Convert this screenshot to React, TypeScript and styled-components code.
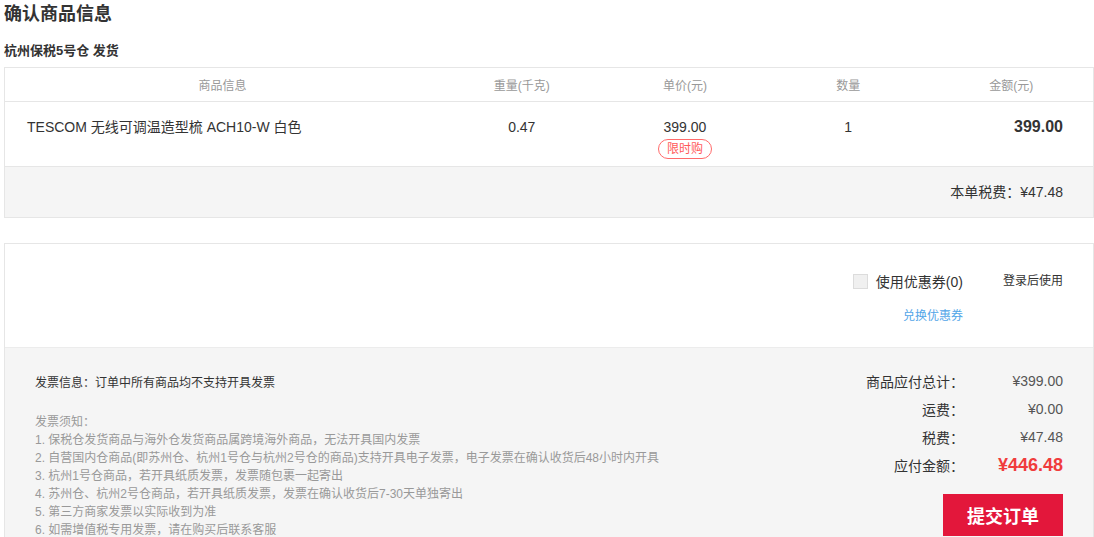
import React from "react";
import styled, { createGlobalStyle } from "styled-components";

const Global = createGlobalStyle`
  html, body { margin: 0; padding: 0; background: #fff; }
  body {
    font-family: "Liberation Sans", Arial, "Noto Sans CJK SC", sans-serif;
    color: #333;
  }
`;

const Page = styled.div`
  width: 1090px;
  padding-left: 4px;
`;

const Title = styled.h2`
  margin: 0;
  font-size: 18px;
  font-weight: bold;
  line-height: 28px;
  color: #333;
`;

const Warehouse = styled.div`
  margin-top: 13px;
  margin-bottom: 6px;
  font-size: 13px;
  font-weight: bold;
  line-height: 20px;
  color: #333;
`;

const Box = styled.div<{ $top?: number }>`
  border: 1px solid #e6e6e6;
  margin-top: ${(p) => p.$top ?? 0}px;
`;

const GridRow = styled.div`
  display: grid;
  grid-template-columns: 40% 15% 15% 15% 15%;
  border-bottom: 1px solid #e6e6e6;
`;

const HeadRow = styled(GridRow)`
  box-sizing: border-box;
  height: 34px;
  padding-bottom: 1px;
  align-items: center;
  font-size: 12px;
  color: #999;
  text-align: center;
`;

const ItemRow = styled(GridRow)`
  height: 49px;
  padding-top: 15px;
  font-size: 14px;
  line-height: 20px;
  color: #333;
`;

const Cell = styled.div<{ $align?: "left" | "center" | "right" }>`
  text-align: ${(p) => p.$align ?? "center"};
  padding: ${(p) => (p.$align === "left" ? "0 0 0 22px" : p.$align === "right" ? "0 30px 0 0" : "0")};
  display: flex;
  flex-direction: column;
  align-items: ${(p) => (p.$align === "left" ? "flex-start" : p.$align === "right" ? "flex-end" : "center")};
`;

const Amount = styled.span`
  font-size: 16px;
  font-weight: bold;
  color: #333;
`;

const Badge = styled.span`
  margin-top: 2px;
  display: inline-block;
  box-sizing: border-box;
  height: 20px;
  line-height: 18px;
  padding: 0 8px;
  border: 1px solid #ff6b6b;
  border-radius: 10px;
  font-size: 12px;
  color: #ff5a5a;
`;

const TaxRow = styled.div`
  height: 50px;
  line-height: 50px;
  background: #f5f5f5;
  text-align: right;
  padding-right: 30px;
  font-size: 14px;
  color: #333;
`;

const CouponSection = styled.div`
  height: 76px;
  padding: 27px 30px 0 0;
  display: flex;
  justify-content: flex-end;
  align-items: flex-start;
`;

const CouponCol = styled.div`
  display: flex;
  flex-direction: column;
  align-items: flex-end;
`;

const CheckLine = styled.label`
  display: flex;
  align-items: center;
  height: 20px;
  font-size: 14px;
  color: #333;
`;

const Check = styled.span`
  width: 13px;
  height: 13px;
  border: 1px solid #dcdcdc;
  background: #f0f0f0;
  margin-right: 8px;
`;

const Link = styled.a`
  margin-top: 15px;
  font-size: 12px;
  line-height: 20px;
  color: #52a6e8;
  text-decoration: none;
`;

const LoginHint = styled.div`
  margin-left: 40px;
  font-size: 12px;
  line-height: 20px;
  color: #333;
`;

const Footer = styled.div`
  background: #f5f5f5;
  border-top: 1px solid #ececec;
  padding: 19px 30px 0 30px;
  display: flex;
  justify-content: space-between;
  min-height: 200px;
`;

const Invoice = styled.div`
  font-size: 12px;
  line-height: 18px;
  padding-top: 7px;
`;

const InvoiceHead = styled.div`
  color: #333;
  margin-bottom: 21px;
`;

const Notes = styled.div`
  color: #999;
`;

const Summary = styled.div`
  display: flex;
  flex-direction: column;
  align-items: flex-end;
`;

const SumRow = styled.div`
  display: grid;
  grid-template-columns: 120px 99px;
  align-items: center;
  height: 28px;
  font-size: 14px;
`;

const SumLabel = styled.span`
  text-align: right;
  color: #333;
`;

const SumValue = styled.span<{ $total?: boolean }>`
  text-align: right;
  color: ${(p) => (p.$total ? "#f03c3c" : "#555")};
  font-size: ${(p) => (p.$total ? "18px" : "14px")};
  font-weight: ${(p) => (p.$total ? "bold" : "normal")};
`;

const Submit = styled.button`
  margin-top: 15px;
  width: 120px;
  height: 42px;
  border: none;
  background: #e3173b;
  color: #fff;
  font-family: "Noto Sans CJK SC", sans-serif;
  font-size: 18px;
  font-weight: bold;
  cursor: pointer;
`;

const notes = [
  "发票须知：",
  "1. 保税仓发货商品与海外仓发货商品属跨境海外商品，无法开具国内发票",
  "2. 自营国内仓商品(即苏州仓、杭州1号仓与杭州2号仓的商品)支持开具电子发票，电子发票在确认收货后48小时内开具",
  "3. 杭州1号仓商品，若开具纸质发票，发票随包裹一起寄出",
  "4. 苏州仓、杭州2号仓商品，若开具纸质发票，发票在确认收货后7-30天单独寄出",
  "5. 第三方商家发票以实际收到为准",
  "6. 如需增值税专用发票，请在购买后联系客服",
];

const sums: { label: string; value: string; total?: boolean }[] = [
  { label: "商品应付总计：", value: "¥399.00" },
  { label: "运费：", value: "¥0.00" },
  { label: "税费：", value: "¥47.48" },
  { label: "应付金额：", value: "¥446.48", total: true },
];

export default function App() {
  return (
    <Page>
      <Global />
      <Title>确认商品信息</Title>
      <Warehouse>杭州保税5号仓 发货</Warehouse>
      <Box>
        <HeadRow>
          <Cell>商品信息</Cell>
          <Cell>重量(千克)</Cell>
          <Cell>单价(元)</Cell>
          <Cell>数量</Cell>
          <Cell>金额(元)</Cell>
        </HeadRow>
        <ItemRow>
          <Cell $align="left">TESCOM 无线可调温造型梳 ACH10-W 白色</Cell>
          <Cell>0.47</Cell>
          <Cell>
            <span>399.00</span>
            <Badge>限时购</Badge>
          </Cell>
          <Cell>1</Cell>
          <Cell $align="right">
            <Amount>399.00</Amount>
          </Cell>
        </ItemRow>
        <TaxRow>本单税费：¥47.48</TaxRow>
      </Box>
      <Box $top={25}>
        <CouponSection>
          <CouponCol>
            <CheckLine>
              <Check />
              使用优惠券(0)
            </CheckLine>
            <Link href="#">兑换优惠券</Link>
          </CouponCol>
          <LoginHint>登录后使用</LoginHint>
        </CouponSection>
        <Footer>
          <Invoice>
            <InvoiceHead>发票信息：订单中所有商品均不支持开具发票</InvoiceHead>
            <Notes>
              {notes.map((n) => (
                <div key={n}>{n}</div>
              ))}
            </Notes>
          </Invoice>
          <Summary>
            {sums.map((s) => (
              <SumRow key={s.label}>
                <SumLabel>{s.label}</SumLabel>
                <SumValue $total={s.total}>{s.value}</SumValue>
              </SumRow>
            ))}
            <Submit>提交订单</Submit>
          </Summary>
        </Footer>
      </Box>
    </Page>
  );
}
